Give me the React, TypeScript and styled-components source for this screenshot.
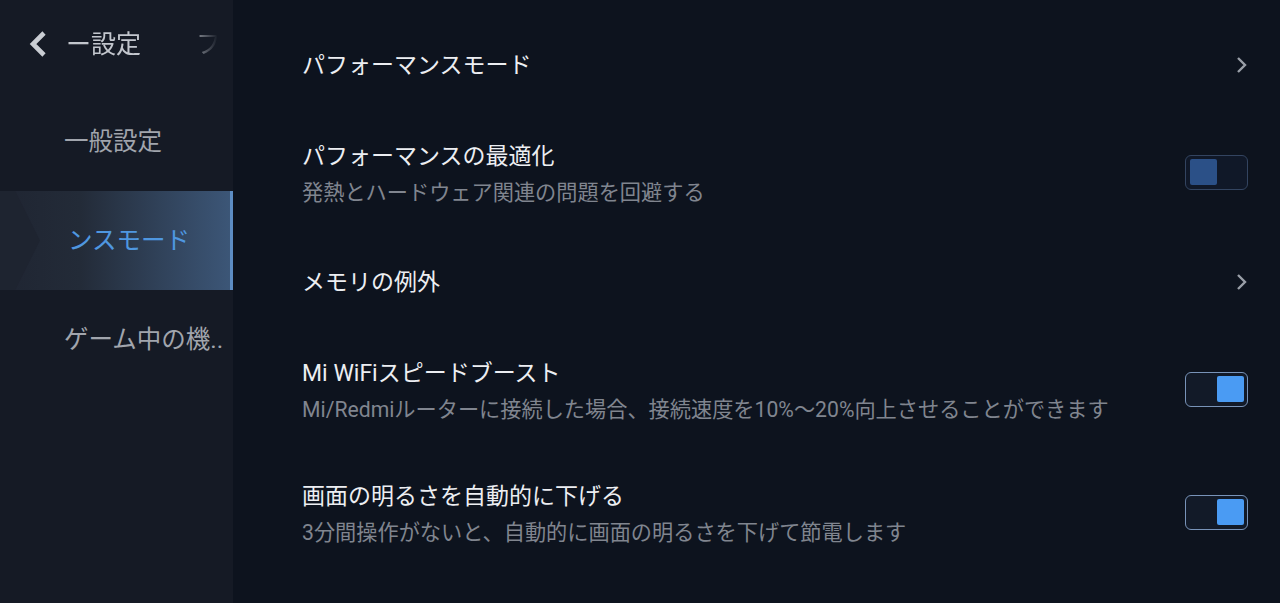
import { createGlobalStyle, styled } from "styled-components";

const GlobalStyle = createGlobalStyle`
  html, body {
    margin: 0;
    padding: 0;
    background: #0d131e;
  }
  body {
    font-family: "Roboto", "Noto Sans CJK JP", sans-serif;
  }
`;

const colors = {
  page: "#0d131e",
  side: "#151a25",
  title: "#eceef2",
  sub: "#80858f",
  sideText: "#a1a5ad",
  accent: "#4f97e0",
};

type Item = {
  title: string;
  sub?: string;
  kind: "link" | "on" | "off";
};

const items: Item[] = [
  { title: "パフォーマンスモード", kind: "link" },
  { title: "パフォーマンスの最適化", sub: "発熱とハードウェア関連の問題を回避する", kind: "off" },
  { title: "メモリの例外", kind: "link" },
  {
    title: "Mi WiFiスピードブースト",
    sub: "Mi/Redmiルーターに接続した場合、接続速度を10%〜20%向上させることができます",
    kind: "on",
  },
  {
    title: "画面の明るさを自動的に下げる",
    sub: "3分間操作がないと、自動的に画面の明るさを下げて節電します",
    kind: "on",
  },
];

function Chevron({ left }: { left?: boolean }) {
  if (left) {
    return (
      <svg width="22" height="28" viewBox="0 0 22 28">
        <path d="M17 3 L6 14 L17 25" fill="none" stroke="#c9cdd3" strokeWidth="4.6" strokeLinejoin="miter" />
      </svg>
    );
  }
  return (
    <svg width="14" height="18" viewBox="0 0 14 18">
      <path d="M4 2 L11 9 L4 16" fill="none" stroke="#9a9fa8" strokeWidth="2.4" />
    </svg>
  );
}

export default function App() {
  return (
    <>
      <GlobalStyle />
      <Page>
        <Sidebar>
          <Header>
            <BackButton>
              <Chevron left />
            </BackButton>
            <Marquee>
              <span>ー設定</span>
              <Gap />
              <span>フォーマンス</span>
            </Marquee>
          </Header>
          <NavItem>
            <NavClip>
              <NavText>一般設定</NavText>
            </NavClip>
          </NavItem>
          <NavItem $active>
            <NavClip>
              <NavText $shift={122.5}>パフォーマンスモード</NavText>
            </NavClip>
          </NavItem>
          <NavItem>
            <NavClip>
              <NavText>ゲーム中の機..</NavText>
            </NavClip>
          </NavItem>
        </Sidebar>
        <Main>
          {items.map((it) => (
            <Row key={it.title} $tall={!!it.sub}>
              <TextBlock>
                <Title>{it.title}</Title>
                {it.sub && <Sub>{it.sub}</Sub>}
              </TextBlock>
              {it.kind === "link" ? (
                <ChevronBox>
                  <Chevron />
                </ChevronBox>
              ) : (
                <Toggle $on={it.kind === "on"}>
                  <Knob $on={it.kind === "on"} />
                </Toggle>
              )}
            </Row>
          ))}
        </Main>
      </Page>
    </>
  );
}

const Page = styled.div({
  display: "flex",
  width: 1280,
  height: 603,
  overflow: "hidden",
  background: colors.page,
});

const Sidebar = styled.div({
  width: 233,
  flexShrink: 0,
  background: colors.side,
  display: "flex",
  flexDirection: "column",
});

const Header = styled.div({
  height: 92,
  display: "flex",
  alignItems: "center",
  paddingLeft: 27,
  boxSizing: "border-box",
});

const BackButton = styled.div({
  width: 24,
  height: 28,
  display: "flex",
  alignItems: "center",
  marginTop: -4,
});

const Marquee = styled.div({
  marginLeft: 15,
  width: 152,
  overflow: "hidden",
  whiteSpace: "nowrap",
  display: "flex",
  fontSize: 25,
  color: "#c2c6cd",
  lineHeight: "30px",
  marginTop: -2,
  WebkitMaskImage: "linear-gradient(to right, #000 78%, transparent 100%)",
  maskImage: "linear-gradient(to right, #000 78%, transparent 100%)",
});

const Gap = styled.span({
  display: "inline-block",
  width: 55,
  flexShrink: 0,
});

const NavItem = styled.div<{ $active?: boolean }>`
  position: relative;
  height: 99px;
  display: flex;
  align-items: center;
  padding-left: ${(p) => (p.$active ? 68 : 64)}px;
  box-sizing: border-box;
  color: ${(p) => (p.$active ? colors.accent : colors.sideText)};
  background: ${(p) =>
    p.$active ? "linear-gradient(to right, #1f2532 0%, #232b38 35%, #3c5677 100%)" : "transparent"};
  border-right: 3px solid ${(p) => (p.$active ? "#5d8dc4" : "transparent")};
  &::before {
    content: "";
    display: ${(p) => (p.$active ? "block" : "none")};
    position: absolute;
    left: 0;
    top: 0;
    bottom: 0;
    width: 40px;
    background: #1e2430;
    clip-path: polygon(0 0, 38% 0, 100% 50%, 38% 100%, 0 100%);
  }
`;

const NavClip = styled.div({
  width: 166,
  overflow: "hidden",
  whiteSpace: "nowrap",
  position: "relative",
});

const NavText = styled.div<{ $shift?: number }>`
  font-size: 24.5px;
  line-height: 30px;
  margin-left: ${(p) => (p.$shift ? `${-p.$shift}px` : "0")};
`;

const Main = styled.div({
  flex: 1,
  padding: "19px 32px 0 69px",
  display: "flex",
  flexDirection: "column",
});

const Row = styled.div<{ $tall: boolean }>`
  height: ${(p) => (p.$tall ? 123 : 94)}px;
  display: flex;
  align-items: center;
  justify-content: space-between;
`;

const TextBlock = styled.div({
  display: "flex",
  flexDirection: "column",
  gap: 6,
});

const Title = styled.div({
  fontSize: 23,
  lineHeight: "30px",
  color: colors.title,
});

const Sub = styled.div({
  fontSize: 21.2,
  lineHeight: "30px",
  color: colors.sub,
});

const ChevronBox = styled.div({
  display: "flex",
  alignItems: "center",
  marginTop: -2,
});

const Toggle = styled.div<{ $on: boolean }>`
  width: 63px;
  height: 35px;
  box-sizing: border-box;
  border-radius: 6px;
  border: 1.5px solid ${(p) => (p.$on ? "#7893b8" : "#334460")};
  background: ${(p) => (p.$on ? "#121a28" : "#101828")};
  display: flex;
  align-items: center;
  justify-content: ${(p) => (p.$on ? "flex-end" : "flex-start")};
  padding: 0 3.5px;
  margin-top: -5px;
`;

const Knob = styled.div<{ $on: boolean }>`
  width: 27px;
  height: 26px;
  border-radius: 2px;
  background: ${(p) => (p.$on ? "#4a9bf3" : "#2b5087")};
`;
